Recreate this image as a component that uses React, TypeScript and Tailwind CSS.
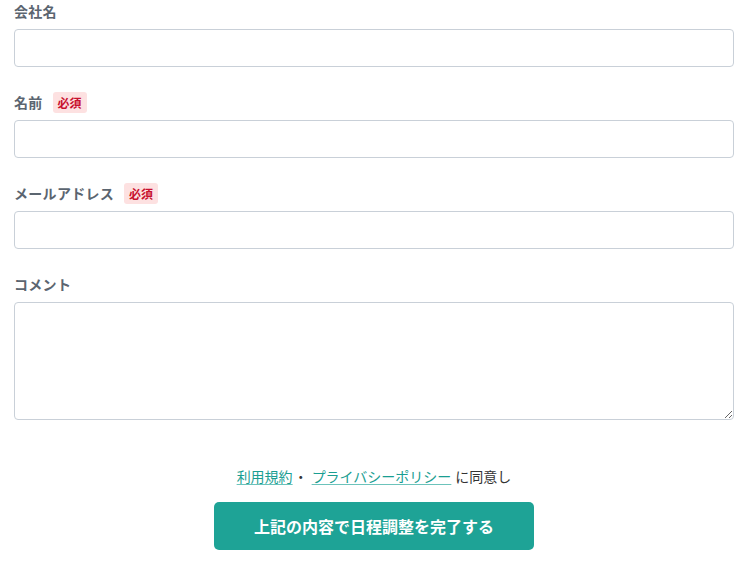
import React from 'react';

const FONT = { fontFamily: '"Noto Sans CJK JP", "Noto Sans", sans-serif' };

function Field({
  label,
  required,
  textarea,
}: {
  label: string;
  required?: boolean;
  textarea?: boolean;
}) {
  return (
    <div className="mb-6">
      <div className="flex items-center gap-[10px] h-[22px] mb-[7px]">
        <span className="text-[14px] font-bold text-[#5b6570] leading-[22px] tracking-[0.3px]">{label}</span>
        {required && (
          <span className="h-[21px] px-[5px] rounded-[3px] bg-[#fde1e1] text-[#c8102e] text-[12px] font-bold leading-[21px]">
            必須
          </span>
        )}
      </div>
      {textarea ? (
        <textarea className="block w-full h-[118px] rounded-[4px] border border-[#c9d0d8] bg-white px-3 py-2 text-[14px] outline-none" />
      ) : (
        <input className="block w-full h-[38px] rounded-[4px] border border-[#c9d0d8] bg-white px-3 text-[14px] outline-none" />
      )}
    </div>
  );
}

export default function App() {
  return (
    <div className="w-[756px] h-[569px] bg-white overflow-hidden" style={FONT}>
      <div className="px-[14px] w-[748px]">
        <Field label="会社名" />
        <Field label="名前" required />
        <Field label="メールアドレス" required />
        <Field label="コメント" textarea />

        <p className="mt-[45px] text-center text-[14px] leading-[22px] text-[#333]">
          <a className="text-[#1a9e92] underline underline-offset-2 decoration-[#6cc3bb]" href="#">
            利用規約
          </a>
          <span className="ml-[1px] mr-[4px]">・</span>
          <a className="text-[#1a9e92] underline underline-offset-2 decoration-[#6cc3bb]" href="#">
            プライバシーポリシー
          </a>
          <span className="ml-[4px]">に同意し</span>
        </p>

        <div className="flex justify-center mt-[15px]">
          <button
            type="button"
            className="w-[320px] h-[48px] rounded-[5px] bg-[#1ea396] text-white text-[16px] font-bold"
          >
            上記の内容で日程調整を完了する
          </button>
        </div>
      </div>
    </div>
  );
}
